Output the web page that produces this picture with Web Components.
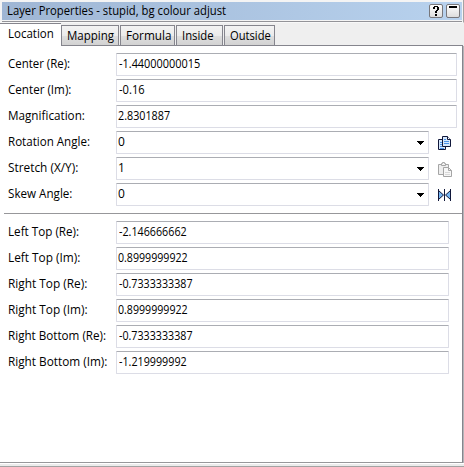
<!DOCTYPE html>
<html lang="en">
<head>
<meta charset="utf-8">
<title>Layer Properties</title>
<style>
    html, body {
        margin: 0;
        height: 100%;
        overflow: hidden;
        background-color: #f0f0f0;
        font: 12px/16px "Open Sans", "Noto Sans", sans-serif;
        color: #000;
    }
</style>
</head>
<body>
<layer-window>
    <title-bar slot="title"><fit-text w="219">Layer Properties - stupid, bg colour adjust</fit-text></title-bar>
    <tab-strip slot="tabs">
        <tab-item active size="61"><fit-text w="46">Location</fit-text></tab-item>
        <tab-item size="58"><fit-text w="47">Mapping</fit-text></tab-item>
        <tab-item size="55"><fit-text w="45">Formula</fit-text></tab-item>
        <tab-item size="47"><fit-text w="32">Inside</fit-text></tab-item>
        <tab-item size="51"><fit-text w="41">Outside</fit-text></tab-item>
    </tab-strip>
    <field-group>
        <field-row label="Center (Re):" lw="62" value="-1.44000000015" vw="81" box="341"></field-row>
        <field-row label="Center (Im):" lw="63" value="-0.16" vw="26" box="341"></field-row>
        <field-row label="Magnification:" lw="77" value="2.8301887" vw="52" box="341"></field-row>
        <field-row label="Rotation Angle:" lw="82" value="0" vw="7" box="313" combo><tool-icon name="copy"></tool-icon></field-row>
        <field-row label="Stretch (X/Y):" lw="70" value="1" vw="7" box="313" combo><tool-icon name="paste"></tool-icon></field-row>
        <field-row label="Skew Angle:" lw="64" value="0" vw="7" box="313" combo><tool-icon name="mirror"></tool-icon></field-row>
    </field-group>
    <field-group ruled>
        <field-row label="Left Top (Re):" lw="71" value="-2.146666662" vw="68" box="333"></field-row>
        <field-row label="Left Top (Im):" lw="72" value="0.8999999922" vw="70" box="333"></field-row>
        <field-row label="Right Top (Re):" lw="79" value="-0.7333333387" vw="74" box="333"></field-row>
        <field-row label="Right Top (Im):" lw="80" value="0.8999999922" vw="70" box="333"></field-row>
        <field-row label="Right Bottom (Re):" lw="98" value="-0.7333333387" vw="74" box="333"></field-row>
        <field-row label="Right Bottom (Im):" lw="99" value="-1.219999992" vw="68" box="333"></field-row>
    </field-group>
</layer-window>

<script>
class baseElement extends HTMLElement {
    constructor() {
        super();
        this.attachShadow({mode:"open"});
    }

    connectedCallback(){
        let template = document.createElement('template');
        template.innerHTML = this.getStyles() + this.getTemplate();
        this.shadowRoot.appendChild(template.content.cloneNode(true));
    }
}

// one line of text, narrowed to the width given in "w"
class fitText extends baseElement {
    getTemplate(){
        return /*html*/ `<span><slot></slot></span>`
    }
    getStyles(){
        return /*html*/ `
            <style>
                :host {
                    display: block;
                    width: ${this.getAttribute('w')}px;
                    height: 16px;
                    white-space: nowrap;
                }

                span {
                    display: inline-block;
                    transform-origin: 0 0;
                }
            </style>
        `
    }
    connectedCallback(){
        super.connectedCallback();
        const span = this.shadowRoot.querySelector('span');
        const natural = span.offsetWidth;
        if(natural){
            span.style.transform = `scaleX(${this.getAttribute('w') / natural})`;
        }
    }
}

class layerWindow extends baseElement {
    getTemplate(){
        return /*html*/ `
            <slot name="title"></slot>
            <slot name="tabs"></slot>
            <main><slot></slot></main>
            <footer></footer>
        `
    }
    getStyles(){
        return /*html*/ `
            <style>
                :host {
                    display: flex;
                    flex-direction: column;
                    box-sizing: border-box;
                    width: 464px;
                    height: 467px;
                    background-color: #fff;
                }

                main {
                    flex: 1;
                    box-sizing: border-box;
                    padding-top: 7px;
                    margin-right: 1px;
                    border-right: 1px solid #85858d;
                    border-bottom: 1px solid #97979a;
                    box-shadow: 1px 0 #b4b4b8;
                }

                footer {
                    height: 2px;
                    border-top: 1px solid #fff;
                    border-bottom: 1px solid #a3a3a3;
                    background-color: #ececec;
                }
            </style>
        `
    }
}

class titleBar extends baseElement {
    getTemplate(){
        return /*html*/ `
            <header>
                <slot></slot>
                <svg width="31" height="14" viewBox="0 0 31 14">
                    <defs>
                        <linearGradient id="g" x2="0" y2="1">
                            <stop offset="0" stop-color="#fff"/>
                            <stop offset="1" stop-color="#dcdcdc"/>
                        </linearGradient>
                    </defs>
                    <rect x=".5" y=".5" width="13" height="13" rx="1.5" fill="url(#g)" stroke="#77777b"/>
                    <rect x="17.5" y=".5" width="13" height="13" rx="1.5" fill="url(#g)" stroke="#77777b"/>
                    <path d="M5 2h4v1h-4zM4 3h2v2h-2zM8 3h2v3h-2zM7 6h2v1h-2zM6 7h2v2h-2zM6 10h2v2h-2z"/>
                    <path d="M20 2h8v2h-8z"/>
                </svg>
            </header>
        `
    }
    getStyles(){
        return /*html*/ `
            <style>
                :host {
                    display: block;
                    box-sizing: border-box;
                    height: 23px;
                    padding: 2px 1px 0 2px;
                    border-bottom: 1px solid #f8f8f8;
                    border-right: 1px solid #a3a3a3;
                    background-color: #f4f4f4;
                }

                header {
                    display: flex;
                    justify-content: space-between;
                    box-sizing: border-box;
                    height: 20px;
                    padding: 1px 2px 0 5px;
                    border-bottom: 1px solid #939398;
                    background: linear-gradient(#f4f4f4, #f4f4f4) 0 18px / 100% 1px no-repeat, linear-gradient(90deg, #9fb6d4, #b8d2ee);
                }

                svg {
                    margin-top: 1px;
                }
            </style>
        `
    }
}

class tabStrip extends baseElement {
    getTemplate(){
        return /*html*/ `<slot></slot>`
    }
    getStyles(){
        return /*html*/ `
            <style>
                :host {
                    display: flex;
                    align-items: flex-end;
                    height: 23px;
                    background: linear-gradient(#85858d, #85858d) 0 100% / 463px 1px no-repeat #efefef;
                }
            </style>
        `
    }
}

class tabItem extends baseElement {
    getTemplate(){
        return /*html*/ `<slot></slot>`
    }
    getStyles(){
        return /*html*/ `
            <style>
                :host {
                    display: block;
                    box-sizing: border-box;
                    width: ${this.getAttribute('size')}px;
                    height: 21px;
                    margin-right: 1px;
                    padding: 2px 0 0 5px;
                    border: 1px solid #85858d;
                    background: linear-gradient(#f3f3f3, #ebebeb 50%, #dedede 52%, #d2d2d2);
                }

                :host([active]) {
                    height: 23px;
                    margin-right: 0;
                    padding: 2px 0 0 8px;
                    border-left: 0;
                    border-right: 0;
                    border-bottom: 0;
                    background: #fff;
                }
            </style>
        `
    }
}

class fieldGroup extends baseElement {
    getTemplate(){
        return /*html*/ `<slot></slot>`
    }
    getStyles(){
        return /*html*/ `
            <style>
                :host {
                    display: grid;
                    grid-auto-rows: 23px;
                    row-gap: 3px;
                }

                :host([ruled]) {
                    margin: 7px 0 0 4px;
                    padding-top: 7px;
                    border-top: 1px solid #97979a;
                    --indent: 4px;
                }
            </style>
        `
    }
}

class fieldRow extends baseElement {
    getTemplate(){
        return /*html*/ `
            <fit-text class="label" w="${this.getAttribute('lw')}">${this.getAttribute('label')}</fit-text>
            <div class="box">
                <fit-text w="${this.getAttribute('vw')}">${this.getAttribute('value')}</fit-text>
                ${this.hasAttribute('combo') ? '<svg width="7" height="4"><path d="M0 0h7v1h-1v1h-1v1h-1v1h-1v-1h-1v-1h-1v-1h-1z"/></svg>' : ''}
            </div>
            <slot></slot>
        `
    }
    getStyles(){
        const negative = this.getAttribute('value').startsWith('-');
        return /*html*/ `
            <style>
                :host {
                    display: grid;
                    grid-template-columns: 108px ${this.getAttribute('box')}px 24px;
                    padding-left: var(--indent, 8px);
                }

                .label {
                    padding-top: 3px;
                }

                .box {
                    display: flex;
                    justify-content: space-between;
                    box-sizing: border-box;
                    height: 23px;
                    padding: 2px 4px 0 ${negative ? 2 : 1}px;
                    border: 1px solid #dcdde6;
                    border-top-color: #abadb3;
                    border-radius: 1px;
                    background-color: #fff;
                }

                .box svg {
                    margin-top: 7px;
                }
            </style>
        `
    }
}

class toolIcon extends baseElement {
    getTemplate(){
        const icons = {
            copy: `
                <path d="M.5 3.5h7v10h-7z" fill="#d7e8fc" stroke="#10173a"/>
                <path d="M2 6.5h2M2 8.5h2M2 10.5h2M2 12.5h4" stroke="#4b93e8"/>
                <path d="M4.5.5h5l3 3v7h-8z" fill="#d7e8fc" stroke="#10173a"/>
                <path d="M9.5.5v3h3" fill="#fff" stroke="#10173a"/>
                <path d="M6 3.5h2M6 5.5h5M6 7.5h5" stroke="#4b93e8"/>`,
            paste: `
                <path d="M.5 2.5h10v10h-10z" fill="#eee" stroke="#a5a5a5"/>
                <path d="M3.5 3.5v-2h1v-1h2v1h1v2z" fill="#f4f4f4" stroke="#a5a5a5"/>
                <path d="M5.5 5.5h5l3 3v6h-8z" fill="#f7f7f7" stroke="#a5a5a5"/>
                <path d="M10.5 5.5v3h3" fill="none" stroke="#a5a5a5"/>
                <path d="M7 10.5h5M7 12.5h5" stroke="#d8d8d8"/>`,
            mirror: `
                <path d="M.5 2.5v9l5-4.5zM12.5 2.5v9l-5-4.5z" fill="#75b5f2" stroke="#10173a"/>
                <path d="M6.5 1v12" stroke="#10173a"/>
                <path d="M.5 1v12M12.5 1v12" stroke="#10173a"/>`
        };
        return /*html*/ `<svg width="15" height="15">${icons[this.getAttribute('name')]}</svg>`
    }
    getStyles(){
        return /*html*/ `
            <style>
                :host {
                    display: block;
                    padding: 5px 0 0 9px;
                }

                svg {
                    display: block;
                }
            </style>
        `
    }
}

customElements.define('fit-text', fitText);
customElements.define('layer-window', layerWindow);
customElements.define('title-bar', titleBar);
customElements.define('tab-strip', tabStrip);
customElements.define('tab-item', tabItem);
customElements.define('field-group', fieldGroup);
customElements.define('field-row', fieldRow);
customElements.define('tool-icon', toolIcon);
</script>
</body>
</html>
